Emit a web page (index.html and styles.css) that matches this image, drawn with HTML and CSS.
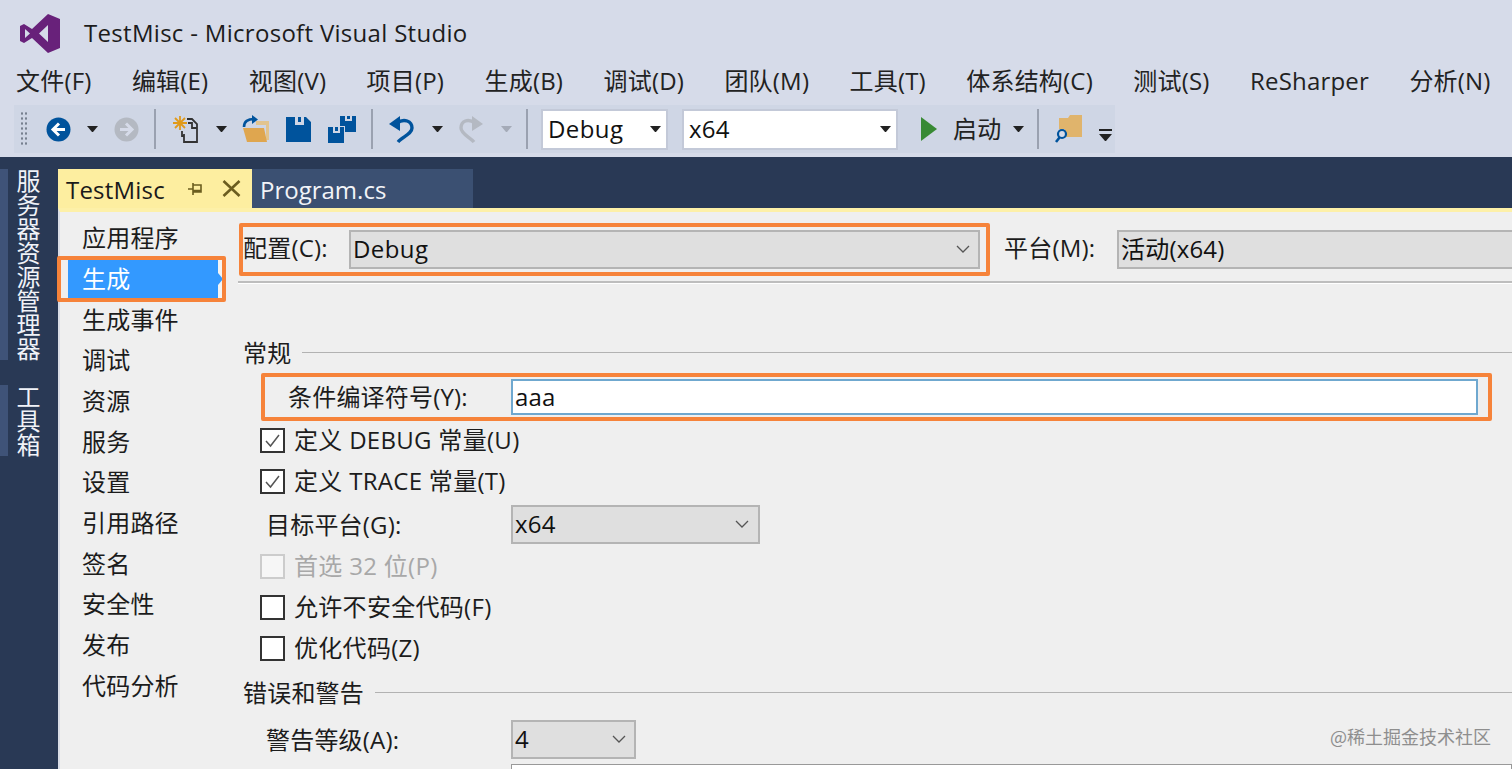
FILE: index.html
```html
<!DOCTYPE html>
<html lang="zh-CN">
<head>
<meta charset="utf-8">
<title>TestMisc - Microsoft Visual Studio</title>
<link rel="stylesheet" href="styles.css">
</head>
<body>
<div class="titlebar">
  <svg class="logo" viewBox="0 0 40 39"><path fill="#68217a" fill-rule="evenodd" d="M28 0 40 5V34L28 39 12 24 4 29 0 27V12L4 10 12 15ZM28 11 19 19.500 28 28ZM5 15V24L10 19.500Z"/></svg>
  <span class="title">TestMisc - Microsoft Visual Studio</span>
</div>
<nav class="menubar">
  <span>文件(F)</span><span>编辑(E)</span><span>视图(V)</span><span>项目(P)</span><span>生成(B)</span><span>调试(D)</span><span>团队(M)</span><span>工具(T)</span><span>体系结构(C)</span><span>测试(S)</span><span>ReSharper</span><span>分析(N)</span>
</nav>
<div class="toolbar">
  <i class="grip"></i>
  <svg class="ic back" viewBox="0 0 25 25"><circle cx="12.500" cy="12.500" r="12" fill="#00539c"/><path d="M13 6.500 7 12.500 13 18.500M7 12.500H19" fill="none" stroke="#fff" stroke-width="3"/></svg>
  <i class="caret c1"></i>
  <svg class="ic fwd" viewBox="0 0 25 25"><circle cx="12.500" cy="12.500" r="12" fill="#b4b9c2"/><path d="M12 6.500 18 12.500 12 18.500M18 12.500H6" fill="none" stroke="#d6dbe9" stroke-width="3"/></svg>
  <i class="sep s1"></i>
  <svg class="ic newp" viewBox="0 0 25 27"><path d="M7 0V14M0 7H14M2 2 12 12M12 2 2 12" stroke="#e09a1a" stroke-width="1.800"/><path d="M14 3H19L24 8V26H11V18M9 15V20H11M15 7H19V12H24" fill="none" stroke="#333" stroke-width="1.800"/></svg>
  <i class="caret c2"></i>
  <svg class="ic open" viewBox="0 0 28 29"><path d="M3 12C3 6 7 4 13 4" fill="none" stroke="#00539c" stroke-width="2.600"/><path fill="#00539c" d="M11 0 17 4.500 11 9Z"/><path fill="#e2c48e" d="M15 6H28V25H25V10H15Z"/><path fill="#dfa64f" d="M2 13H23L26 27H6Z"/></svg>
  <svg class="ic save" viewBox="0 0 25 25"><path fill="#00539c" fill-rule="evenodd" d="M0 0H20L25 5V25H0ZM9 0V8H18V0H15V5H12V0Z"/></svg>
  <svg class="ic saveall" viewBox="0 0 28 27"><path fill="#00539c" fill-rule="evenodd" d="M12 0H28V16H17V10H12ZM17 0V5H24V0H22V3H19V0Z"/><path fill="#00539c" fill-rule="evenodd" d="M0 11H16V27H0ZM5 11V17H12V11H10V15H7V11Z"/></svg>
  <i class="sep s2"></i>
  <svg class="ic undo" viewBox="0 0 25 27"><path d="M8 7C15 2 23 5 23 12 23 18 13 21 9 26" fill="none" stroke="#00539c" stroke-width="3.400"/><path fill="#00539c" d="M0 8 11 0 11 15Z"/></svg>
  <i class="caret c3"></i>
  <svg class="ic redo" viewBox="0 0 24 27"><path d="M16 7C9 2 2 5 2 12 2 18 11 21 15 26" fill="none" stroke="#b4b9c2" stroke-width="3.400"/><path fill="#b4b9c2" d="M24 8 13 0 13 15Z"/></svg>
  <i class="caret c4"></i>
  <i class="sep s3"></i>
  <div class="combo debug">Debug<i class="caret"></i></div>
  <div class="combo plat">x64<i class="caret"></i></div>
  <svg class="ic play" viewBox="0 0 16 24"><path fill="#388a34" d="M0 0 16 12 0 24Z"/></svg>
  <span class="start">启动</span>
  <i class="caret c5"></i>
  <i class="sep s4"></i>
  <svg class="ic find" viewBox="0 0 27 28"><path fill="#e0b46c" d="M4 3H13L15 0H27V22H10V14H4Z"/><circle cx="7" cy="19" r="4" fill="#d6dbe9" stroke="#00539c" stroke-width="2.200"/><path d="M4.500 22.500 1 27" stroke="#00539c" stroke-width="2.600"/></svg>
  <i class="overflow"></i>
</div>
<main class="shell">
  <aside class="sidetabs">
    <div class="sidetab server">服务器资源管理器</div>
    <div class="sidetab tools">工具箱</div>
  </aside>
  <section class="doc">
    <div class="tabs">
      <div class="tab active">TestMisc
        <svg class="pin" viewBox="0 0 16 14"><path d="M1 7H6M6 1V13M6 3H14V10H6M6 8.500H14" fill="none" stroke="#6b5d1f" stroke-width="1.600"/></svg>
        <svg class="close" viewBox="0 0 19 17"><path d="M1.500 1 17.500 16M17.500 1 1.500 16" stroke="#6b5d1f" stroke-width="2.600"/></svg>
      </div>
      <div class="tab other">Program.cs</div>
    </div>
    <div class="page">
      <ul class="nav">
        <li>应用程序</li>
        <li class="selected">生成</li>
        <li>生成事件</li>
        <li>调试</li>
        <li>资源</li>
        <li>服务</li>
        <li>设置</li>
        <li>引用路径</li>
        <li>签名</li>
        <li>安全性</li>
        <li>发布</li>
        <li>代码分析</li>
      </ul>
      <div class="form">
        <div class="configrow">
          <div class="cfg marked">
            <label class="cfglabel">配置(C):</label>
            <div class="select cfgselect">Debug<svg class="chev" viewBox="0 0 14 8"><path d="M1 1 7 7 13 1" fill="none" stroke="#555" stroke-width="1.300"/></svg></div>
          </div>
          <label class="platlabel">平台(M):</label>
          <div class="select platselect">活动(x64)</div>
        </div>
        <h2 class="group first"><span>常规</span></h2>
        <div class="symbols marked">
          <label class="symlabel">条件编译符号(Y):</label>
          <div class="input">aaa</div>
        </div>
        <div class="check"><svg class="box" viewBox="0 0 25 25"><rect x="1" y="1" width="23" height="23" fill="#fff" stroke="#333" stroke-width="2"/><path d="M6 13 10.500 18 19 7" fill="none" stroke="#555" stroke-width="1.500"/></svg>定义 DEBUG 常量(U)</div>
        <div class="check"><svg class="box" viewBox="0 0 25 25"><rect x="1" y="1" width="23" height="23" fill="#fff" stroke="#333" stroke-width="2"/><path d="M6 13 10.500 18 19 7" fill="none" stroke="#555" stroke-width="1.500"/></svg>定义 TRACE 常量(T)</div>
        <div class="field target">
          <label>目标平台(G):</label>
          <div class="select small">x64<svg class="chev" viewBox="0 0 14 8"><path d="M1 1 7 7 13 1" fill="none" stroke="#555" stroke-width="1.300"/></svg></div>
        </div>
        <div class="check disabled"><svg class="box" viewBox="0 0 25 25"><rect x="1" y="1" width="23" height="23" fill="#f6f6f6" stroke="#ccc" stroke-width="2"/></svg>首选 32 位(P)</div>
        <div class="check"><svg class="box" viewBox="0 0 25 25"><rect x="1" y="1" width="23" height="23" fill="#fff" stroke="#333" stroke-width="2"/></svg>允许不安全代码(F)</div>
        <div class="check"><svg class="box" viewBox="0 0 25 25"><rect x="1" y="1" width="23" height="23" fill="#fff" stroke="#333" stroke-width="2"/></svg>优化代码(Z)</div>
        <h2 class="group second"><span>错误和警告</span></h2>
        <div class="field warn">
          <label>警告等级(A):</label>
          <div class="select tiny">4<svg class="chev" viewBox="0 0 14 8"><path d="M1 1 7 7 13 1" fill="none" stroke="#555" stroke-width="1.300"/></svg></div>
        </div>
        <div class="field suppress"><div class="cut"></div></div>
      </div>
    </div>
  </section>
</main>
<div class="watermark">@稀土掘金技术社区</div>
</body>
</html>
```
FILE: styles.css
```css
*, *::before, *::after { box-sizing: border-box; }
html, body { height: 100%; }
body {
  margin: 0;
  height: 769px;
  overflow: hidden;
  display: flex;
  flex-direction: column;
  background: #d6dbe9;
  color: #1c1c1c;
  font: 24px/32px "Open Sans", "Noto Sans CJK SC", sans-serif;
  letter-spacing: 0.2px;
}
.titlebar { height: 66px; flex: none; display: flex; align-items: center; padding-left: 20px; }
.logo { width: 40px; height: 39px; margin-top: 1px; }
.title { margin-left: 24px; letter-spacing: 0.3px; }
.menubar { height: 39px; flex: none; display: flex; gap: 40.350px; padding: 0 0 10px 16px; align-items: center; white-space: nowrap; color: #222; }
.toolbar {
  height: 48px; width: 1101px; flex: none; margin-left: 14px; margin-bottom: 4px;
  background: #cfd6e5; display: flex; align-items: center; position: relative;
}
.toolbar i { display: block; flex: none; }
.grip { width: 8px; height: 36px; margin-left: 6px;
  background-image: radial-gradient(circle, #77808f 1px, transparent 1.300px); background-size: 4px 5px; }
.ic { flex: none; display: block; }
.caret { width: 11px; height: 6px; border: 5.500px solid transparent; border-top: 6px solid #222; border-bottom: 0; }
.back { width: 25px; height: 25px; margin-left: 18px; }
.c1 { margin-left: 16px; }
.fwd { width: 25px; height: 25px; margin-left: 16px; }
.sep { width: 2px; height: 40px; background: #9aa1b0; }
.s1 { margin-left: 15px; }
.newp { width: 25px; height: 27px; margin-left: 17px; }
.c2 { margin-left: 18px; }
.open { width: 28px; height: 29px; margin-left: 14px; }
.save { width: 25px; height: 25px; margin-left: 17px; }
.saveall { width: 28px; height: 27px; margin-left: 17px; }
.s2 { margin-left: 15px; }
.undo { width: 25px; height: 27px; margin-left: 16px; }
.c3 { margin-left: 18px; }
.redo { width: 24px; height: 27px; margin-left: 16px; }
.toolbar .c4 { margin-left: 18px; border-top-color: #a5abb8; }
.s3 { margin-left: 14px; }
.combo {
  flex: none; height: 41px; background: #fff; border: 2px solid #c3c9d8;
  display: flex; align-items: center; justify-content: space-between; padding: 0 5px 0 5px; color: #111;
}
.debug { width: 127px; margin-left: 13px; letter-spacing: 0.4px; }
.plat { width: 216px; margin-left: 14px; }
.play { width: 16px; height: 24px; margin-left: 23px; }
.start { margin-left: 16px; width: 48px; color: #222; flex: none; white-space: nowrap; }
.c5 { margin-left: 12px; }
.s4 { margin-left: 13px; }
.find { width: 27px; height: 28px; margin-left: 16px; }
.toolbar .overflow { width: 13px; height: 13px; margin: 13px 0 0 17px;
  background: linear-gradient(#222 2px, transparent 2px);
  position: relative; }
.overflow::after { content: ""; position: absolute; left: 0; top: 5px; width: 13px; height: 7px; border: 6.500px solid transparent; border-top: 7px solid #222; border-bottom: 0; }

.shell { flex: 1; min-height: 0; background: #293955; display: flex; padding-top: 12px; }
.sidetabs { width: 58px; flex: none; display: flex; flex-direction: column; gap: 25px; }
.sidetab {
  writing-mode: vertical-rl; color: #f0f2f8; font-size: 24px; line-height: 28px; letter-spacing: 0;
  width: 41px; white-space: nowrap; border-left: 8px solid #3f5378; padding-left: 5px;
}
.server { height: 191px; }
.tools { height: 71px; }
.doc { flex: 1; min-width: 0; display: flex; flex-direction: column; }
.tabs { height: 39px; flex: none; display: flex; }
.tab { display: flex; align-items: center; line-height: 38px; padding: 3px 0 0 8px; }
.tab.active { width: 194px; background: #fdeea0; color: #1a1a1a; }
.pin { width: 16px; height: 14px; margin: -3px 0 0 auto; }
.close { width: 19px; height: 17px; margin: -3px 11px 0 19px; }
.tab.other { width: 221px; background: #3b5072; color: #f2f4f8; letter-spacing: 0; }
.page {
  flex: 1; min-height: 0; display: flex; background: #efefef;
  border-top: 4px solid #fdf0a8; border-left: 2px solid #d9dde6;
}
.nav { list-style: none; margin: 0; padding: 6px 0 0 8px; width: 183px; flex: none; }
.nav li { height: 40.700px; line-height: 40px; padding-left: 14px; position: relative; white-space: nowrap; }
.nav li.selected { width: 154px; height: 40px; margin-bottom: 0.900px; background: linear-gradient(90deg, #3399ff 150px, #f4f4f4 150px); color: #fff; }
.nav li.selected::before {
  content: ""; position: absolute; left: 150px; top: 14px; width: 5px; height: 12px;
  border: 6px solid transparent; border-left: 5px solid #3399ff; border-right: 0;
}
.nav li.selected::after {
  content: ""; position: absolute; left: -11px; top: -3px; width: 169px; height: 46px;
  border: 4px solid #f6833a; border-radius: 2px;
}
.form { flex: 1; min-width: 0; }
.configrow { height: 71px; margin-left: -5px; padding: 18px 0 0 5px; display: flex; border-bottom: 2px solid #bdbdbd; box-shadow: 0 1px 0 #fff; white-space: nowrap; align-items: flex-start; }
.marked { position: relative; }
.marked::after {
  content: ""; position: absolute; border: 4px solid #f6833a; border-radius: 2px; pointer-events: none;
}
.cfg { display: flex; width: 737px; flex: none; }
.cfg::after { left: -4px; top: -7px; width: 751px; height: 53px; }
.cfglabel { width: 106px; line-height: 36px; }
.select {
  height: 39px; display: flex; align-items: center; justify-content: space-between;
  background: #dfdfdf; border: 2px solid #b4b4b4; padding: 0 10px 2px 2px; color: #111; position: relative;
}
.cfgselect { width: 631px; padding-left: 2px; padding-right: 8px; letter-spacing: 0.4px; }
.chev { width: 14px; height: 8px; flex: none; }
.platlabel { margin-left: 24px; width: 113px; line-height: 36px; flex: none; }
.platselect { flex: 1; border-right: 0; }
.group { margin: 0; font: inherit; display: flex; align-items: center; gap: 11px; height: 32px; }
.group::after { content: ""; flex: 1; height: 1px; background: #b2b2b2; margin-top: -2px; }
.group.first { margin-top: 54px; }
.group.second { margin-top: 8.500px; }
.symbols { margin: 4px 0 0 18px; height: 48px; width: 1231px; display: flex; align-items: center; padding-left: 27px; }
.symbols::after { left: 0; top: 0; width: 100%; height: 100%; }
.symlabel { width: 223px; flex: none; white-space: nowrap; }
.input { width: 967px; height: 36px; background: #fff; border: 2px solid #6fa8cf; line-height: 32px; padding-left: 2px; color: #111; }
.check { height: 41px; display: flex; align-items: center; padding-left: 17px; white-space: nowrap; color: #1c1c1c; letter-spacing: 0.3px; }
.symbols + .check { margin-top: -1.500px; }
.box { width: 25px; height: 25px; margin-right: 9px; flex: none; }
.disabled { color: #a8a8a8; }
.field { display: flex; align-items: center; padding-left: 23px; }
.field label { width: 245px; flex: none; white-space: nowrap; }
.target { height: 42px; margin-top: 2px; }
.small { width: 249px; padding-right: 9px; }
.tiny { width: 125px; padding-right: 8px; }
.warn { height: 39px; margin-top: 11px; }
.suppress { padding-left: 268px; margin-top: 5px; }
.cut { width: 1001px; height: 5px; background: #fff; border: 1px solid #999; border-bottom: 0; }
.watermark {
  position: absolute; left: 1330px; top: 724px; font-size: 18px; line-height: 24px; color: #8e8e8e; letter-spacing: 0;
  font-family: "Noto Sans CJK SC", sans-serif;
}
```
